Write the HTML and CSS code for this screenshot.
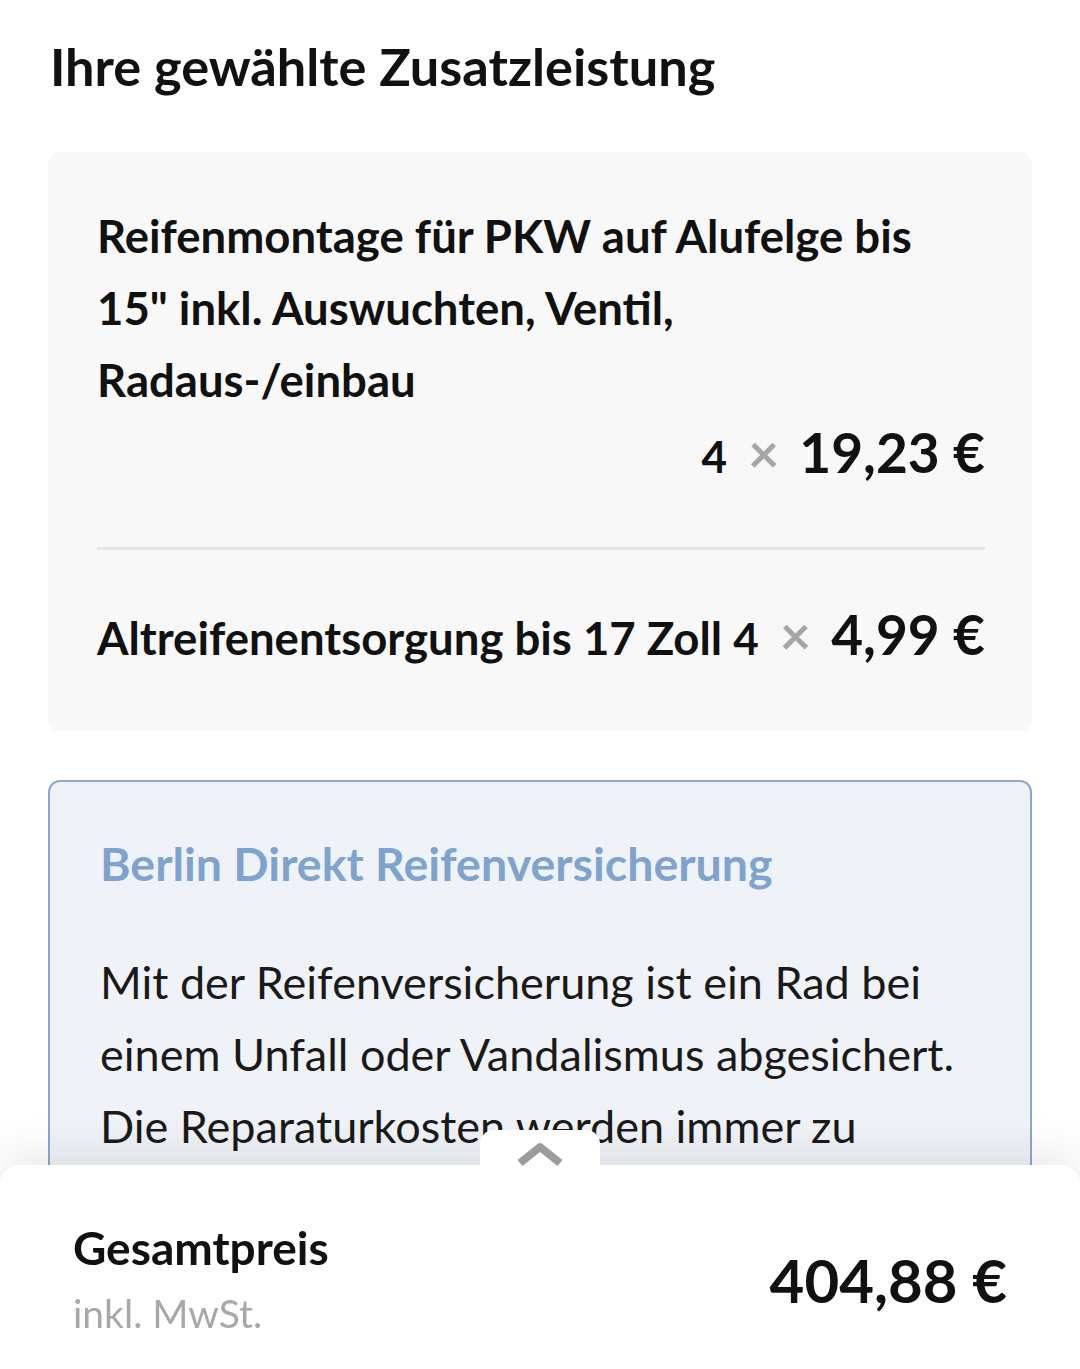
FILE: index.html
```html
<!DOCTYPE html>
<html lang="de">
<head>
<meta charset="utf-8">
<title>Zusatzleistung</title>
<link rel="stylesheet" href="styles.css">
</head>
<body>
<main class="page">
  <h1 class="heading">Ihre gewählte Zusatzleistung</h1>

  <section class="card">
    <div class="item">
      <div class="item-title item-title-wrap">Reifenmontage für PKW auf Alufelge bis 15" inkl. Auswuchten, Ventil, Radaus-/einbau</div>
      <div class="price-row">
        <span class="qty">4</span>
        <span class="times">×</span>
        <span class="price">19,23 €</span>
      </div>
    </div>
    <div class="divider"></div>
    <div class="item item-inline">
      <span class="item-title nowrap">Altreifenentsorgung bis 17 Zoll</span>
      <span class="price-row nowrap">
        <span class="qty">4</span>
        <span class="times">×</span>
        <span class="price">4,99 €</span>
      </span>
    </div>
  </section>

  <section class="insurance">
    <h2 class="insurance-title">Berlin Direkt Reifenversicherung</h2>
    <p class="insurance-text">Mit der Reifenversicherung ist ein Rad bei einem Unfall oder Vandalismus abgesichert. Die Reparaturkosten werden immer zu 100% übernommen.</p>
  </section>
</main>

<footer class="sheet">
  <div class="sheet-tab">
    <svg class="chevron" width="48" height="26" viewBox="0 0 48 26" aria-hidden="true">
      <path d="M4 22 L24 6 L44 22" fill="none" stroke="#9c9c9c" stroke-width="8" stroke-linejoin="round"/>
    </svg>
  </div>
  <div class="sheet-body">
    <div class="total-label">
      <div class="total-title">Gesamtpreis</div>
      <div class="total-sub">inkl. MwSt.</div>
    </div>
    <div class="total-price">404,88 €</div>
  </div>
</footer>
</body>
</html>
```

FILE: styles.css
```css
html, body {
  margin: 0;
  padding: 0;
  background: #ffffff;
  height: 100%;
  overflow: hidden;
}

body {
  font-family: Lato, "Open Sans", sans-serif;
  color: #111111;
}

.page {
  padding: 0 48px 0 48px;
}

.heading {
  margin: 0;
  padding: 30px 0 0 2px;
  font-size: 52.3px;
  font-weight: 700;
  line-height: 72px;
  color: #111111;
}

.card {
  margin-top: 50px;
  background: #f8f8f8;
  border-radius: 12px;
  padding: 48px 47px 57px 49px;
}

.item-title {
  font-size: 45.5px;
  font-weight: 700;
  line-height: 72px;
}

.item-title-wrap {
  max-width: 840px;
}

.nowrap {
  white-space: nowrap;
}

.price-row {
  display: flex;
  justify-content: flex-end;
  align-items: baseline;
  line-height: 72px;
}

.qty {
  font-size: 44px;
  font-weight: 700;
}

.times {
  font-size: 54px;
  font-weight: 700;
  color: #a6a6a6;
  margin: 0 20px 0 21px;
  line-height: 72px;
}

.price {
  font-size: 55px;
  font-weight: 700;
}

.divider {
  height: 3px;
  background: #e5e5e5;
  margin: 55px 0 48px 0;
}

.item-inline {
  display: flex;
  justify-content: space-between;
  align-items: baseline;
  column-gap: 10px;
}

.insurance {
  margin-top: 49px;
  background: #eff3f8;
  border: 2px solid #8ba9cc;
  border-radius: 12px;
  padding: 45px 56px 60px 50px;
}

.insurance-title {
  margin: 0;
  font-size: 46.5px;
  font-weight: 700;
  line-height: 72px;
  color: #7fa3cf;
}

.insurance-text {
  margin: 47px 0 0 0;
  font-size: 45px;
  font-weight: 400;
  line-height: 72px;
  color: #1a1a1a;
}

.sheet {
  position: fixed;
  left: 0;
  right: 0;
  bottom: 0;
  height: 204px;
  background: #ffffff;
  border-radius: 20px 20px 0 0;
  box-shadow: 0 -18px 40px rgba(0, 0, 0, 0.07);
}

.sheet-tab {
  position: absolute;
  left: 480px;
  top: -35px;
  width: 120px;
  height: 60px;
  background: #ffffff;
  border-radius: 14px 14px 0 0;
  display: flex;
  justify-content: center;
  align-items: flex-start;
  padding-top: 11px;
  box-sizing: border-box;
}

.sheet-body {
  display: flex;
  justify-content: space-between;
  align-items: center;
  padding: 50px 73px 0 73px;
}

.total-title {
  font-size: 46px;
  font-weight: 700;
  line-height: 66px;
}

.total-sub {
  font-size: 39px;
  color: #a8a8a8;
  line-height: 64px;
}

.total-price {
  font-size: 60px;
  font-weight: 700;
}
```
